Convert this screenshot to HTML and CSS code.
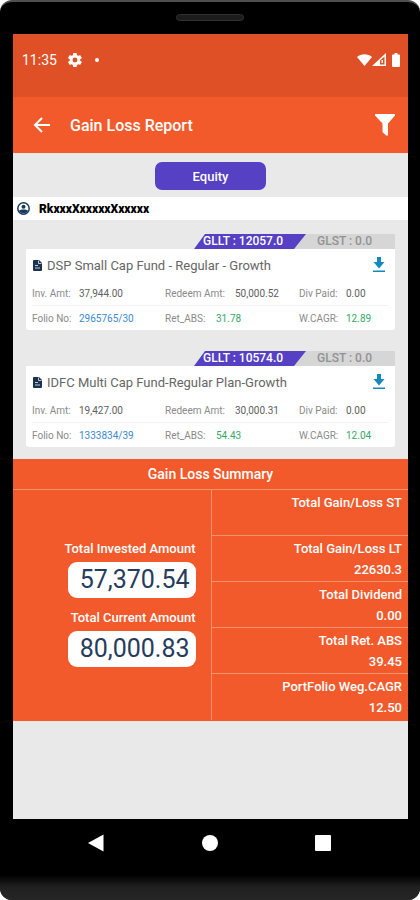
FILE: index.html
```html
<!DOCTYPE html>
<html lang="en">
<head>
<meta charset="utf-8">
<meta name="viewport" content="width=device-width, initial-scale=1">
<title>Gain Loss Report</title>
<link rel="stylesheet" href="styles.css">
</head>
<body>
<div class="phone">
  <div class="bezel"><span class="speaker"></span></div>
  <div class="screen">
    <div class="status">
      <span>11:35</span>
      <svg class="gear" width="14" height="14" viewBox="2 2 20 20"><path fill="#fff" d="M19.4 13a7.500 7.500 0 0 0 0-2l2.100-1.600a.5.5 0 0 0 .1-.6l-2-3.500a.5.5 0 0 0-.6-.2l-2.500 1a7 7 0 0 0-1.700-1l-.4-2.600a.5.5 0 0 0-.5-.5h-4a.5.5 0 0 0-.5.5L9 5.100a7 7 0 0 0-1.700 1l-2.500-1a.5.5 0 0 0-.6.200l-2 3.500a.5.5 0 0 0 .1.600L4.500 11a7.500 7.500 0 0 0 0 2l-2.200 1.600a.5.5 0 0 0-.1.600l2 3.500c.1.200.4.300.6.200l2.500-1a7 7 0 0 0 1.700 1l.4 2.600c0 .3.200.5.500.5h4c.3 0 .5-.2.500-.5l.4-2.600a7 7 0 0 0 1.700-1l2.500 1c.2.1.5 0 .6-.2l2-3.500a.5.5 0 0 0-.1-.6zM12 15.500a3.500 3.500 0 1 1 0-7 3.500 3.500 0 0 1 0 7z"/></svg>
      <span class="dot"></span>
      <span class="signals">
        <svg width="15" height="12" viewBox="0 0 16 12" preserveAspectRatio="none"><path fill="#fff" d="M0 3C4.500-.8 11.500-.8 16 3L8 12z"/></svg>
        <svg width="14" height="13" viewBox="0 0 14 13"><path fill="#fff" fill-rule="evenodd" d="M0 13 14 0v13zM8 7.500V11.500h4.500V3.500z"/><path fill="#fff" d="M9.500 7h1.500v3H9.500z"/></svg>
        <svg class="battery" width="8" height="14" viewBox="0 0 8 14"><path fill="#fff" d="M2.500 0h3v1.500H7a1 1 0 0 1 1 1V13a1 1 0 0 1-1 1H1a1 1 0 0 1-1-1V2.500a1 1 0 0 1 1-1h1.500z"/></svg>
      </span>
    </div>
    <header class="appbar">
      <button class="icon-button" aria-label="Back"><svg width="18" height="16" viewBox="0 0 18 16"><path d="M17 8H2M9 1 2 8l7 7" fill="none" stroke="#fff" stroke-width="2"/></svg></button>
      <h1>Gain Loss Report</h1>
      <button class="icon-button filter" aria-label="Filter"><svg width="20" height="22" viewBox="0 0 20 22"><path fill="#fff" d="M1 0h18a1 1 0 0 1 .8 1.700L13 9.500v11.300a1 1 0 0 1-1.600.8L8 18.800a1 1 0 0 1-.5-.9V9.500L.2 1.700A1 1 0 0 1 1 0z"/></svg></button>
    </header>
    <div class="tabs"><button class="tab">Equity</button></div>
    <div class="user">
      <svg width="13" height="13" viewBox="0 0 13 13"><circle cx="6.500" cy="6.500" r="5.700" fill="none" stroke="#17395c" stroke-width="1.500"/><circle cx="6.500" cy="4.800" r="2" fill="#17395c"/><path fill="#17395c" d="M2 8.500C4 7 9 7 11 8.500 10 12 3 12 2 8.500z"/></svg>
      <span>RkxxxXxxxxxXxxxxx</span>
    </div>
    <main class="funds">
      <article class="fund">
        <div class="gains"><span class="long"><b>GLLT : 12057.0</b></span><span class="short">GLST : 0.0</span></div>
        <div class="card">
          <div class="title">
            <svg width="9" height="11" viewBox="0 0 9 11"><path fill="#1c3350" d="M1 0h5l3 3v7a1 1 0 0 1-1 1H1a1 1 0 0 1-1-1V1a1 1 0 0 1 1-1z"/><path d="M5.500.5v3h3M2 5.500h3M2 8h5" fill="none" stroke="#c3ccd6"/></svg>
            <h2>DSP Small Cap Fund - Regular - Growth</h2>
            <button class="icon-button" aria-label="Download"><svg width="12" height="16" viewBox="0 0 12 16"><path fill="#1389c0" d="M4 0h4v5h3.500L6 11.500.500 5H4zM0 13.500h12V15H0z"/></svg></button>
          </div>
          <dl class="facts">
            <div><dt>Inv. Amt:</dt><dd>37,944.00</dd></div>
            <div><dt>Redeem Amt:</dt><dd>50,000.52</dd></div>
            <div><dt>Div Paid:</dt><dd>0.00</dd></div>
            <div><dt>Folio No:</dt><dd class="link">2965765/30</dd></div>
            <div><dt>Ret_ABS:</dt><dd class="up">31.78</dd></div>
            <div><dt>W.CAGR:</dt><dd class="up">12.89</dd></div>
          </dl>
        </div>
      </article>
      <article class="fund">
        <div class="gains"><span class="long"><b>GLLT : 10574.0</b></span><span class="short">GLST : 0.0</span></div>
        <div class="card">
          <div class="title">
            <svg width="9" height="11" viewBox="0 0 9 11"><path fill="#1c3350" d="M1 0h5l3 3v7a1 1 0 0 1-1 1H1a1 1 0 0 1-1-1V1a1 1 0 0 1 1-1z"/><path d="M5.500.5v3h3M2 5.500h3M2 8h5" fill="none" stroke="#c3ccd6"/></svg>
            <h2>IDFC Multi Cap Fund-Regular Plan-Growth</h2>
            <button class="icon-button" aria-label="Download"><svg width="12" height="16" viewBox="0 0 12 16"><path fill="#1389c0" d="M4 0h4v5h3.500L6 11.500.500 5H4zM0 13.500h12V15H0z"/></svg></button>
          </div>
          <dl class="facts">
            <div><dt>Inv. Amt:</dt><dd>19,427.00</dd></div>
            <div><dt>Redeem Amt:</dt><dd>30,000.31</dd></div>
            <div><dt>Div Paid:</dt><dd>0.00</dd></div>
            <div><dt>Folio No:</dt><dd class="link">1333834/39</dd></div>
            <div><dt>Ret_ABS:</dt><dd class="up">54.43</dd></div>
            <div><dt>W.CAGR:</dt><dd class="up">12.04</dd></div>
          </dl>
        </div>
      </article>
    </main>
    <section class="summary">
      <h2>Gain Loss Summary</h2>
      <div class="totals">
        <div class="amounts">
          <p>Total Invested Amount</p>
          <strong>57,370.54</strong>
          <p>Total Current Amount</p>
          <strong>80,000.83</strong>
        </div>
        <dl class="figures">
          <div><dt>Total Gain/Loss ST</dt><dd></dd></div>
          <div><dt>Total Gain/Loss LT</dt><dd>22630.3</dd></div>
          <div><dt>Total Dividend</dt><dd>0.00</dd></div>
          <div><dt>Total Ret. ABS</dt><dd>39.45</dd></div>
          <div><dt>PortFolio Weg.CAGR</dt><dd>12.50</dd></div>
        </dl>
      </div>
    </section>
  </div>
  <nav class="softkeys">
    <button class="icon-button" aria-label="Back"><svg width="16" height="18" viewBox="0 0 16 18"><path fill="#fff" d="M15.500.5v17L0 9z"/></svg></button>
    <button class="icon-button" aria-label="Home"><svg width="16" height="16" viewBox="0 0 16 16"><circle cx="8" cy="8" r="8" fill="#fff"/></svg></button>
    <button class="icon-button" aria-label="Recents"><svg width="16" height="16" viewBox="0 0 16 16"><rect width="16" height="16" rx="1" fill="#fff"/></svg></button>
  </nav>
  <div class="chin"></div>
</div>
</body>
</html>
```
FILE: styles.css
```css
* { box-sizing: border-box; }
body, h1, h2, p, dl, dd { margin: 0; }
body { background: #fff; font-family: Roboto, "Liberation Sans", sans-serif; }
svg { display: block; flex: none; }

.phone {
  display: flex;
  flex-direction: column;
  min-height: 100vh;
  overflow: hidden;
  background: #000;
  border-top: 2px solid #505050;
  border-radius: 12px;
}
.bezel { display: flex; justify-content: center; padding: 12px 0 13px; }
.speaker {
  width: 68px;
  height: 7px;
  border: 1px solid #303030;
  border-radius: 4px;
  background: #1c1c1c;
}
.screen { flex: 1; margin: 0 12px 0 13px; background: #e9e9e9; }

.icon-button { padding: 0; border: 0; background: none; cursor: pointer; }

.status {
  display: flex;
  align-items: center;
  height: 63px;
  padding: 0 8px 12px 9px;
  background: #df5026;
  color: #fff;
  font-size: 14px;
}
.gear { margin-left: 11px; }
.dot { width: 4px; height: 4px; margin-left: 13px; border-radius: 50%; background: #fff; }
.signals { display: flex; align-items: center; margin-left: auto; }
.battery { margin-left: 6px; }

.appbar {
  display: flex;
  align-items: center;
  height: 56px;
  padding: 0 13px 0 20px;
  background: #f25a2c;
  color: #fff;
}
.appbar h1 { margin-left: 19px; font-size: 16px; font-weight: 500; }
.filter { margin-left: auto; }

.tabs { display: flex; justify-content: center; padding: 9px 0 7px; }
.tab {
  width: 111px;
  height: 28px;
  padding: 0;
  border: 0;
  border-radius: 7px;
  background: #5640c3;
  color: #fff;
  font: 500 13px Roboto, sans-serif;
}

.user {
  display: flex;
  align-items: center;
  gap: 9px;
  height: 23px;
  padding: 0 4px;
  background: #fff;
  color: #000;
  font-size: 12px;
  font-weight: 900;
}

.funds { display: grid; gap: 21px; padding: 14px 13px 12px; }
.gains { display: flex; justify-content: flex-end; font-size: 12px; line-height: 15px; }
.long {
  z-index: 1;
  width: 112px;
  padding-left: 9px;
  background: #5640c3;
  clip-path: polygon(11px 0, 100% 0, calc(100% - 12px) 100%, 0 100%);
  color: #fff;
}
.long b { font-weight: 500; }
.short {
  width: 101px;
  margin-left: -12px;
  padding-left: 23px;
  background: #d6d6d6;
  color: #929292;
  font-weight: 500;
}
.card { padding: 0 6px; border-radius: 0 0 3px 3px; background: #fff; }
.title { display: flex; align-items: center; height: 32px; padding: 0 4px 0 1px; }
.title h2 { margin-left: 5px; color: #666; font-size: 13px; font-weight: 400; }
.title button { margin-left: auto; }
.facts {
  display: grid;
  grid-template: 25px 24px / 133fr 134fr 90fr;
  color: #8a8a8a;
  font-size: 10px;
}
.facts div { display: flex; align-items: center; }
.facts div:nth-child(-n+3) { border-bottom: 1px solid #f2f2f2; }
.facts dt { width: 47px; white-space: nowrap; }
.facts dd { color: #606060; }
.facts div:nth-child(3n+2) dt { width: 70px; }
.facts div:nth-child(5) dt { width: 51px; }
.facts .link { color: #3c8ad0; }
.facts .up { color: #35a76b; }

.summary { padding-bottom: 1px; background: #f25a2c; color: #fff; }
.summary h2 {
  border-bottom: 1px solid #f7936f;
  font-size: 14px;
  font-weight: 500;
  line-height: 30px;
  text-align: center;
}
.totals { display: grid; grid-template-columns: 1fr 1fr; font-size: 13px; line-height: 16px; }
.amounts { display: flex; flex-direction: column; align-items: flex-end; justify-content: center; padding: 0 15px 2px 0; }
.amounts p { font-weight: 500; }
.amounts strong {
  width: 128px;
  margin: 5px 0 12px;
  padding-right: 6px;
  border-radius: 9px;
  background: #fff;
  color: #263c5c;
  font-size: 25px;
  font-weight: 400;
  line-height: 36px;
  text-align: right;
}
.amounts strong:last-child { margin-bottom: 0; }
.figures { border-left: 1px solid #f7936f; font-weight: 500; text-align: right; }
.figures div { height: 46px; padding: 5px 6px 0 0; border-bottom: 1px solid #f7936f; }
.figures div:last-child { border-bottom: 0; }
.figures dd { margin-top: 5px; }

.softkeys { display: flex; justify-content: space-between; align-items: center; height: 48px; padding: 0 89px 0 88px; }
.chin { height: 33px; background: linear-gradient(#000 8px, #202020 20px, #262626); }
```
